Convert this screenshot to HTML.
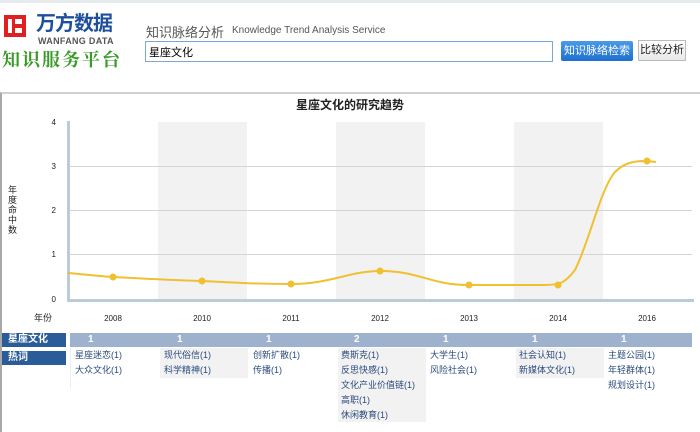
<!DOCTYPE html>
<html><head><meta charset="utf-8"><style>
body{margin:0;width:700px;height:425px;overflow:hidden;background:#fff;font-family:"Liberation Sans","Noto Sans CJK SC",sans-serif;position:relative}
.a{position:absolute}
.topstrip{left:0;top:0;width:700px;height:3px;background:#e6ebee}
.box{left:0;top:92px;width:700px;height:340px;border-top:2px solid #d0d0d0;border-left:2px solid #a8a8a8;box-sizing:border-box}
.hdr{height:14px;font-size:10px;font-weight:bold;color:#fff;line-height:14px}
.kw{font-size:9px;color:#2a4a7c;line-height:15px;white-space:nowrap}
</style></head><body>
<div class="a topstrip"></div>
<div class="a" style="left:4px;top:15px;width:22px;height:22px;background:#e02020"></div>
<div class="a" style="left:8px;top:19px;width:4px;height:14px;background:#fff"></div>
<div class="a" style="left:15px;top:19px;width:7px;height:5px;background:#fff"></div>
<div class="a" style="left:15px;top:28px;width:7px;height:5px;background:#fff"></div>
<div class="a" style="left:36px;top:12px;font-size:20px;font-weight:bold;color:#1e4f9a;letter-spacing:-1px;line-height:24px">万方数据</div>
<div class="a" style="left:38px;top:36px;font-size:9px;font-weight:bold;color:#555;letter-spacing:.3px">WANFANG DATA</div>
<div class="a" style="left:2px;top:48px;font-size:18px;font-weight:bold;color:#3a9a2a;letter-spacing:2px;line-height:22px;font-family:'Noto Serif CJK SC',serif">知识服务平台</div>
<div class="a" style="left:146px;top:22px;font-size:13px;color:#555">知识脉络分析</div>
<div class="a" style="left:232px;top:25px;font-size:10px;color:#555">Knowledge Trend Analysis Service</div>
<div class="a" style="left:145px;top:41px;width:408px;height:21px;border:1px solid #7aa7d6;box-sizing:border-box;font-size:11px;padding:2px 3px">星座文化</div>
<div class="a" style="left:561px;top:41px;width:72px;height:20px;background:linear-gradient(#4a9ae8,#1e6fd0);border-radius:2px;color:#fff;font-size:11px;line-height:20px;text-align:center">知识脉络检索</div>
<div class="a" style="left:638px;top:40px;width:48px;height:21px;border:1px solid #bbb;background:linear-gradient(#fff,#e8e8e8);box-sizing:border-box;font-size:11px;line-height:19px;text-align:center;color:#222">比较分析</div>
<div class="a box"></div>
<div class="a" style="left:0;top:96px;width:700px;text-align:center;font-size:12px;font-weight:bold;color:#222">星座文化的研究趋势</div>
<svg class="a" style="left:0;top:0" width="700" height="330">
<rect x="158" y="122" width="89" height="178" fill="#f2f2f2"/>
<rect x="336" y="122" width="89" height="178" fill="#f2f2f2"/>
<rect x="514" y="122" width="89" height="178" fill="#f2f2f2"/>
<g stroke="#d4d4d4" stroke-width="1"><line x1="69" y1="166.5" x2="692" y2="166.5"/><line x1="69" y1="210.5" x2="692" y2="210.5"/><line x1="69" y1="254.5" x2="692" y2="254.5"/></g>
<line x1="68.5" y1="121" x2="68.5" y2="302" stroke="#bccbd9" stroke-width="3"/>
<line x1="67" y1="300.5" x2="694" y2="300.5" stroke="#bccbd9" stroke-width="3"/>
<g font-size="8" fill="#222" text-anchor="end" font-family="Liberation Sans"><text x="56" y="125">4</text><text x="56" y="169">3</text><text x="56" y="213">2</text><text x="56" y="257">1</text><text x="56" y="302">0</text></g>
<g font-size="8" fill="#222" text-anchor="middle" font-family="Liberation Sans"><text x="113" y="321">2008</text><text x="202" y="321">2010</text><text x="291" y="321">2011</text><text x="380" y="321">2012</text><text x="469" y="321">2013</text><text x="558" y="321">2014</text><text x="647" y="321">2016</text></g>
<text x="34" y="321" font-size="9" fill="#222">年份</text>
<g font-size="9" fill="#222"><text x="8" y="193">年</text><text x="8" y="203">度</text><text x="8" y="213">命</text><text x="8" y="223">中</text><text x="8" y="233">数</text></g>
<path d="M68,273 C90,275 100,276 113,277 C150,279 170,280 202,281 C240,283 260,284 291,284 C330,284 350,271 380,271 C420,271 430,285 469,285 L545,285 C560,285 565,283 575,270 C590,240 600,190 615,172 C625,162 635,161 647,161 L656,162" fill="none" stroke="#f0c030" stroke-width="2"/>
<g fill="#f0c030"><circle cx="113" cy="277" r="3.5"/><circle cx="202" cy="281" r="3.5"/><circle cx="291" cy="284" r="3.5"/><circle cx="380" cy="271" r="3.5"/><circle cx="469" cy="285" r="3.5"/><circle cx="558" cy="285" r="3.5"/><circle cx="647" cy="161" r="3.5"/></g>
</svg>
<div class="a hdr" style="left:2px;top:333px;width:64px;background:#2a5c9a;padding-left:6px;box-sizing:border-box">星座文化</div>
<div class="a hdr" style="left:2px;top:351px;width:64px;background:#2a5c9a;padding-left:6px;box-sizing:border-box">热词</div>
<div class="a" style="left:70px;top:333px;width:622px;height:14px;background:#9fb2cd"></div>
<div class="a" style="left:70px;top:348px;width:1px;height:40px;background:#eee"></div>
<div class="a" style="left:160px;top:348px;width:88px;height:30px;background:#f2f2f2"></div>
<div class="a" style="left:338px;top:348px;width:88px;height:74px;background:#f2f2f2"></div>
<div class="a" style="left:516px;top:348px;width:88px;height:30px;background:#f2f2f2"></div>
<div class="a hdr" style="left:88px;top:333px">1</div>
<div class="a hdr" style="left:177px;top:333px">1</div>
<div class="a hdr" style="left:266px;top:333px">1</div>
<div class="a hdr" style="left:354px;top:333px">2</div>
<div class="a hdr" style="left:443px;top:333px">1</div>
<div class="a hdr" style="left:532px;top:333px">1</div>
<div class="a hdr" style="left:621px;top:333px">1</div>
<div class="a kw" style="left:75px;top:348px">星座迷恋(1)<br>大众文化(1)</div>
<div class="a kw" style="left:164px;top:348px">现代俗信(1)<br>科学精神(1)</div>
<div class="a kw" style="left:253px;top:348px">创新扩散(1)<br>传播(1)</div>
<div class="a kw" style="left:341px;top:348px">费斯克(1)<br>反思快感(1)<br>文化产业价值链(1)<br>高职(1)<br>休闲教育(1)</div>
<div class="a kw" style="left:430px;top:348px">大学生(1)<br>风险社会(1)</div>
<div class="a kw" style="left:519px;top:348px">社会认知(1)<br>新媒体文化(1)</div>
<div class="a kw" style="left:608px;top:348px">主题公园(1)<br>年轻群体(1)<br>规划设计(1)</div>
</body></html>
